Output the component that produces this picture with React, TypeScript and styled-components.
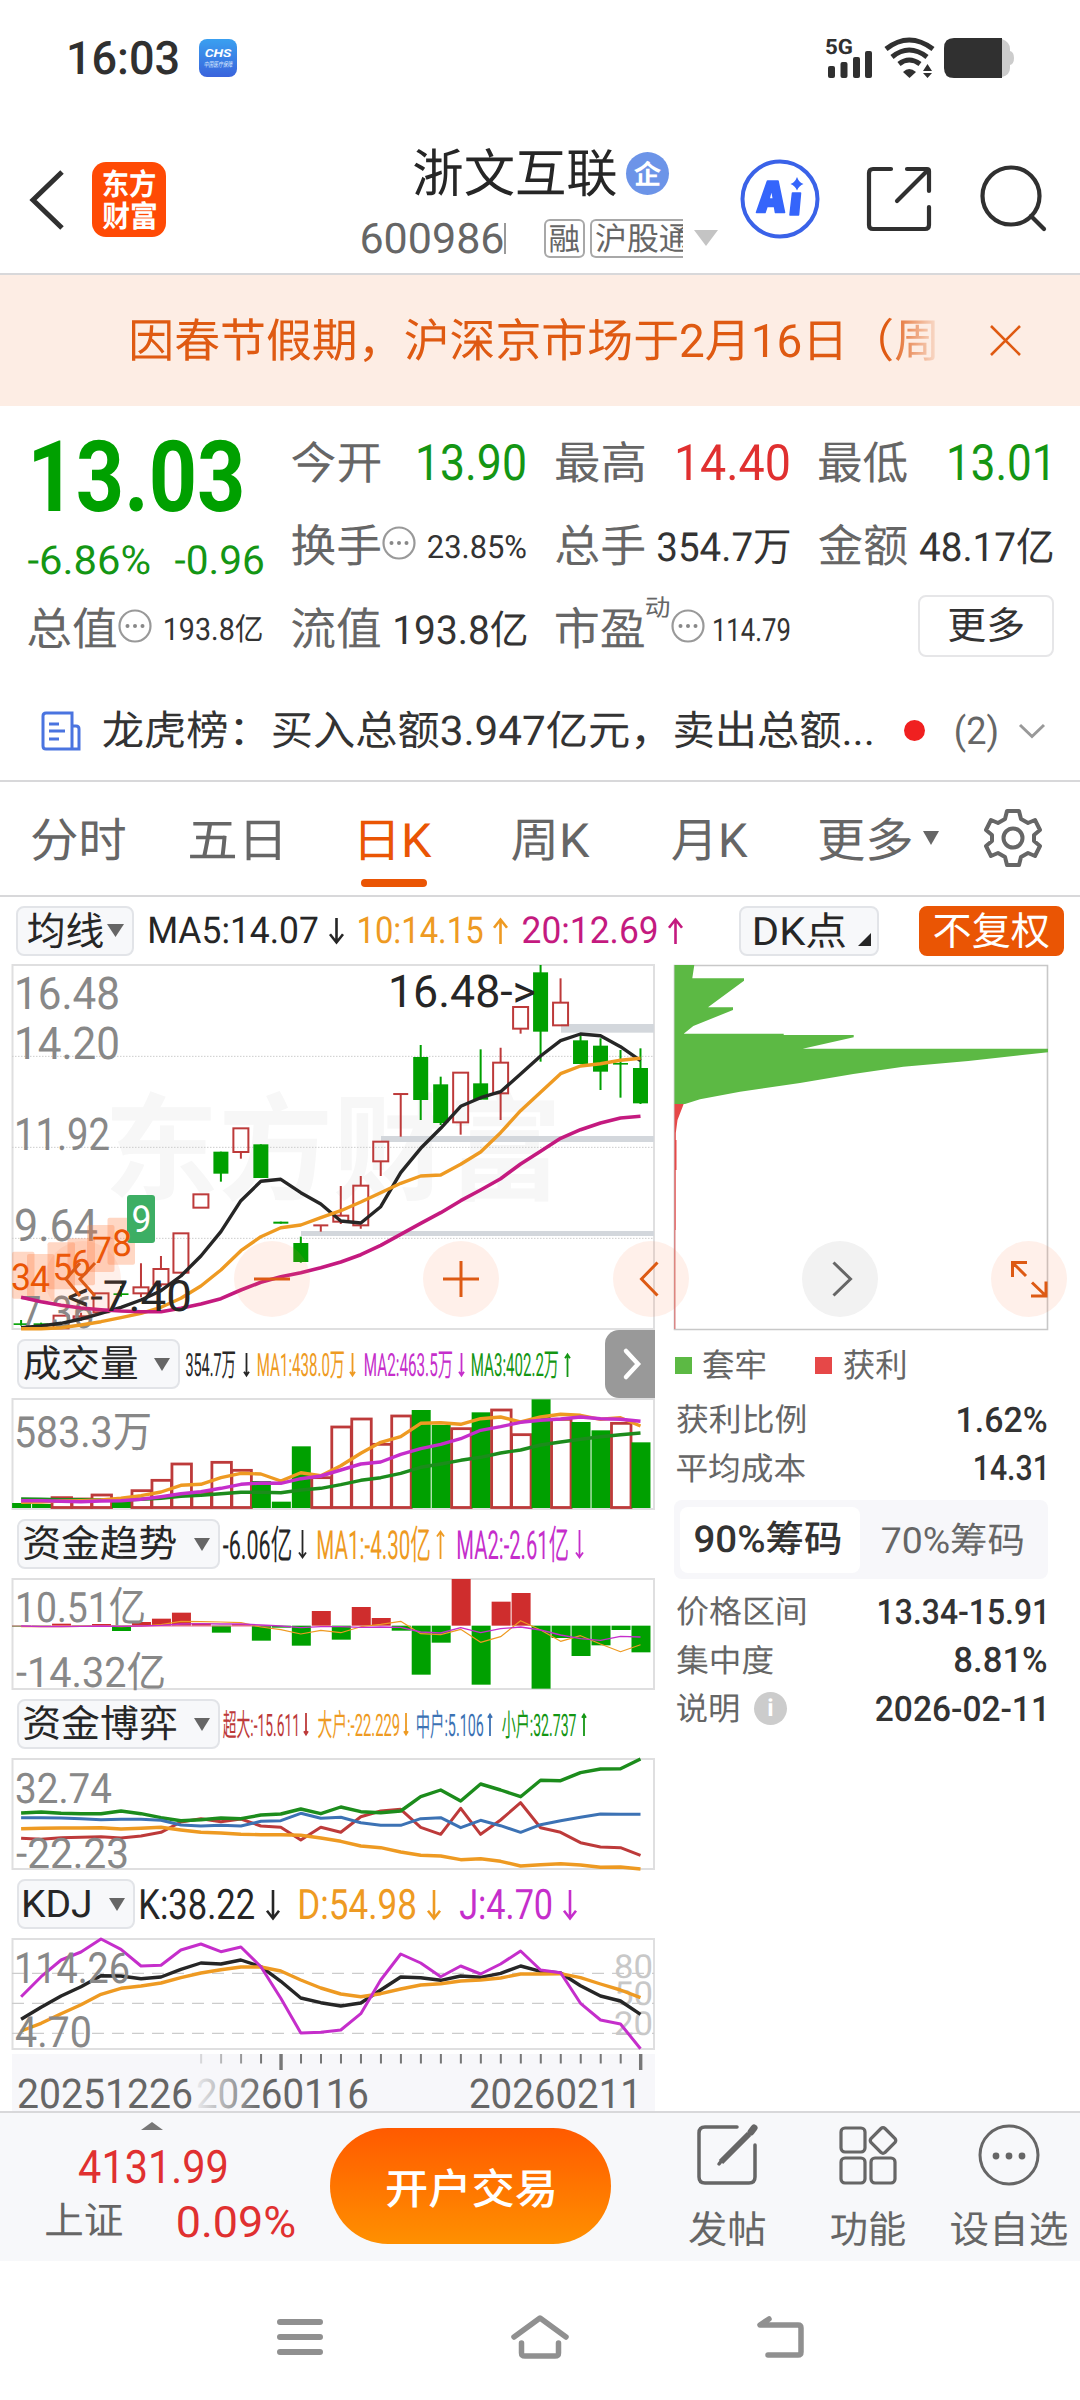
import React, { useLayoutEffect, useRef, useState } from "react";
import styled, { createGlobalStyle } from "styled-components";

const FONT = `Roboto, "Noto Sans CJK SC", sans-serif`;
const C = {
  ink: "#333333", dark: "#262626", grey: "#666666", light: "#888888",
  green: "#00a000", red: "#e03030", orange: "#ea5504", amber: "#ee9a22",
  pink: "#c41a7f", violet: "#c52ecb", line: "#d8d8da", up: "#bd3a3a",
};

const Global = createGlobalStyle`
  *{box-sizing:border-box}
  body{margin:0;background:#fff;font-family:${FONT};color:${C.ink};text-rendering:geometricPrecision}
`;

/* ---------- text fitted to a given ink width ---------- */
const TextBox = styled.span<{ $w: number; $ml: number; $mt: number; $size: number; $wt: number; $c: string }>`
  display: block;
  flex: none;
  width: ${(p) => p.$w}px;
  height: ${(p) => p.$size}px;
  line-height: ${(p) => p.$size + 3}px;
  margin-left: ${(p) => p.$ml}px;
  margin-top: ${(p) => p.$mt}px;
  font-size: ${(p) => p.$size}px;
  font-weight: ${(p) => p.$wt};
  color: ${(p) => p.$c};
  white-space: pre;
`;
const TextInk = styled.span`
  display: inline-block;
  transform-origin: 0 50%;
`;
type TProps = { w: number; size: number; ml?: number; mt?: number; wt?: number; c?: string; children: string };
function T({ w, size, ml = 0, mt = 0, wt = 400, c = C.ink, children }: TProps) {
  const ref = useRef<HTMLSpanElement>(null);
  const [tf, setTf] = useState("none");
  useLayoutEffect(() => {
    const ctx = document.createElement("canvas").getContext("2d");
    if (!ctx || !ref.current) return;
    ctx.font = `${wt} ${size * 4}px ${FONT}`;
    ctx.textRendering = "geometricPrecision";
    const m = ctx.measureText(children);
    const k = ref.current.offsetWidth / m.width;
    /* a leading or trailing 1 has a wide side bearing; part of it stays inside the box */
    const lead = children.startsWith("1") ? size * 0.035 : 0;
    const tail = children.endsWith("1") ? size * 0.07 : 0;
    const left = m.actualBoundingBoxLeft * k + lead;
    const ink = left + m.actualBoundingBoxRight * k + tail;
    const s = w / ink;
    setTf(`translateX(${left * s}px) scaleX(${s})`);
  }, [w, size, wt, children]);
  return (
    <TextBox $w={w} $ml={ml} $mt={mt} $size={size} $wt={wt} $c={c}>
      <TextInk ref={ref} style={{ transform: tf }}>{children}</TextInk>
    </TextBox>
  );
}

/* ---------- layout ---------- */
const Page = styled.div`
  width: 1080px;
  height: 2400px;
  overflow: hidden;
  display: flex;
  flex-direction: column;
  background: #fff;
`;
const Bar = styled.div<{ $h: number; $pl?: number; $pt?: number; $bg?: string; $line?: boolean }>`
  height: ${(p) => p.$h}px;
  flex: none;
  display: flex;
  align-items: center;
  padding-left: ${(p) => p.$pl ?? 0}px;
  padding-top: ${(p) => p.$pt ?? 0}px;
  background: ${(p) => p.$bg ?? "transparent"};
  border-bottom: ${(p) => (p.$line ? `2px solid ${C.line}` : "none")};
`;
const Icon = styled.svg<{ $ml?: number; $mt?: number }>`
  display: block;
  flex: none;
  margin-left: ${(p) => p.$ml ?? 0}px;
  margin-top: ${(p) => p.$mt ?? 0}px;
  overflow: visible;
`;
const ChsIcon = styled.div`
  width: 38px; height: 38px; margin-left: 21px;
  border-radius: 8px;
  background: linear-gradient(#3aa0f0, #3a63dc);
  display: flex; flex-direction: column; align-items: center; padding-top: 8px; gap: 2px;
  font-style: italic;
`;
const Logo = styled.div`
  width: 74px; height: 75px; margin-left: 28px; margin-top: 11px;
  border-radius: 14px; background: #ff4a05;
  display: flex; flex-direction: column; align-items: center; justify-content: center; gap: 2px;
`;
const TitleBlock = styled.div`
  width: 361px; margin-left: 196px; height: 150px;
  display: flex; flex-direction: column;
`;
const Line = styled.div<{ $h: number; $pl?: number; $mt?: number }>`
  display: flex; align-items: center;
  height: ${(p) => p.$h}px;
  margin-top: ${(p) => p.$mt ?? 0}px;
  padding-left: ${(p) => p.$pl ?? 0}px;
`;
const Badge = styled.div`
  width: 43px; height: 43px; border-radius: 50%; margin-left: 10px;
  background: #6c94e8; display: flex; align-items: center; justify-content: center;
`;
const Tag = styled.div<{ $w: number; $ml: number; $cut?: boolean }>`
  width: ${(p) => p.$w}px; height: 39px; margin-left: ${(p) => p.$ml}px;
  border: 2px solid #a8a8a8; border-radius: 6px;
  display: flex; align-items: center; padding-left: 4px; overflow: hidden;
  ${(p) => (p.$cut ? "border-right:none;border-top-right-radius:0;border-bottom-right-radius:0;" : "")}
`;
const Caret = styled.i`
  width: 2px; height: 31px; background: #999; margin-left: 1px;
`;
const Notice = styled.div`
  width: 803px; overflow: hidden; height: 56px; padding-top: 5px;
  mask-image: linear-gradient(90deg, #000 94%, rgba(0,0,0,.15));
`;
const Quotes = styled.div`
  height: 256px; flex: none;
  display: grid;
  grid-template-columns: 236px 236px 235px 235px;
  column-gap: 28px;
  grid-template-rows: 83px 83px 83px;
  padding: 15px 0 0 28px;
`;
const PriceCell = styled.div`
  grid-row: span 2;
  padding-left: 3px;
`;
const Cell = styled.div<{ $pr?: number }>`
  display: flex; align-items: center; justify-content: space-between;
  padding-right: ${(p) => p.$pr ?? 2}px;
`;
const Group = styled.div`display: flex; align-items: center;`;
const MoreButton = styled.div`
  margin: -5px -2px 0 auto; width: 136px; height: 62px;
  border: 2px solid #e6e6e8; border-radius: 8px;
  display: flex; align-items: center; justify-content: center;
`;
const Dot = styled.i`
  width: 21px; height: 21px; border-radius: 50%; background: #f02020; margin-left: 33px;
`;
const TabsRow = styled.div`
  height: 115px; flex: none; display: flex; padding: 0 0 0 32px;
  border-bottom: 2px solid ${C.line};
`;
const Tab = styled.div<{ $ml?: number }>`
  margin-left: ${(p) => p.$ml ?? 0}px;
  display: flex; flex-direction: column; padding-top: 35px;
`;
const Underline = styled.i`
  width: 66px; height: 8px; border-radius: 4px; background: ${C.orange}; margin-top: 15px;
`;
const Chip = styled.div<{ $w: number; $ml?: number; $pl?: number; $solid?: boolean }>`
  width: ${(p) => p.$w}px; height: 50px; margin-left: ${(p) => p.$ml ?? 0}px;
  flex: none; display: flex; align-items: center; padding-left: ${(p) => p.$pl ?? 7}px;
  border-radius: 8px;
  border: 2px solid ${(p) => (p.$solid ? C.orange : "#e2e4e8")};
  background: ${(p) => (p.$solid ? C.orange : "#f7f8fa")};
`;
const Body = styled.div`
  display: flex; height: 1148px; flex: none;
`;
const Charts = styled.div`
  width: 655px; padding-left: 12px; display: flex; flex-direction: column; flex: none;
`;
const Head = styled.div`
  height: 70px; flex: none; display: flex; align-items: center; padding: 0 0 0 5px;
`;
const PanelHandle = styled.div`
  width: 50px; height: 68px; margin-left: auto; flex: none;
  background: #999; border-radius: 14px 0 0 14px;
  display: flex; align-items: center; justify-content: center;
`;
const Side = styled.div`
  width: 374px; margin-left: 19px; display: flex; flex-direction: column;
`;
const Legend = styled.div`
  display: flex; align-items: center; height: 60px; margin-top: 5px;
`;
const Swatch = styled.i<{ $c: string; $ml?: number }>`
  width: 17px; height: 17px; background: ${(p) => p.$c}; margin-left: ${(p) => p.$ml ?? 1}px;
`;
const Stat = styled.div`
  height: 48.5px; display: flex; align-items: center; justify-content: space-between; padding: 0 2px 0 3px;
`;
const Segment = styled.div`
  height: 79px; margin: 8px 0 8px; padding: 6px; border-radius: 8px; background: #f7f7fa; display: flex;
  align-items: center;
`;
const SegOn = styled.div`
  width: 180px; height: 66px; background: #fff; border-radius: 8px;
  display: flex; align-items: center; padding-left: 15px;
`;
const Info = styled.i`
  width: 33px; height: 33px; border-radius: 50%; background: #ccc; margin-left: 16px;
  color: #fff; font: 700 24px/33px ${FONT}; text-align: center;
`;
const Footer = styled.div`
  height: 150px; flex: none; display: flex; background: #f7f8fa; border-top: 2px solid ${C.line};
`;
const IndexBox = styled.div`
  width: 330px; padding: 9px 0 0 46px; display: flex; flex-direction: column;
`;
const TradeButton = styled.div`
  width: 281px; height: 116px; margin-top: 15px; padding-top: 5px; border-radius: 58px;
  background: linear-gradient(#ff5a00, #ff9000);
  display: flex; align-items: center; justify-content: center;
`;
const Action = styled.div<{ $w: number; $ml: number }>`
  width: ${(p) => p.$w}px; margin-left: ${(p) => p.$ml}px; padding-top: 12px;
  display: flex; flex-direction: column; align-items: center;
`;
const NavRow = styled.div`
  height: 139px; display: flex; align-items: center; padding: 12px 0 0 277px;
`;

/* ---------- small drawings ---------- */
const Arrow = ({ up, w, h = 26, c, ml }: { up?: boolean; w: number; h?: number; c: string; ml: number }) => (
  <Icon $ml={ml} $mt={1} width={w} height={h} viewBox={`0 0 ${w} ${h}`}>
    <g fill="none" stroke={c} strokeWidth={w > 10 ? 2.6 : 1.8} transform={up ? undefined : `rotate(180 ${w / 2} ${h / 2})`}>
      <path d={`M${w / 2} ${h}V1.5M1 ${w * 0.55 + 1.5}L${w / 2} 1.5L${w - 1} ${w * 0.55 + 1.5}`} />
    </g>
  </Icon>
);
const Tri = ({ w = 16, h = 13, ml = 0, c = "#666", up, mt }: { w?: number; h?: number; ml?: number; c?: string; up?: boolean; mt?: number }) => (
  <Icon $ml={ml} $mt={mt} width={w} height={h} viewBox={`0 0 ${w} ${h}`}>
    <path fill={c} d={up ? `M0 ${h}H${w}L${w / 2} 0Z` : `M0 0H${w}L${w / 2} ${h}Z`} />
  </Icon>
);
const Dots = ({ ml = 2 }: { ml?: number }) => (
  <Icon $ml={ml} $mt={-6} width="34" height="34" viewBox="0 0 34 34">
    <circle cx="17" cy="17" r="15.5" fill="none" stroke="#999" strokeWidth="2.2" />
    <g fill="#888"><circle cx="9.5" cy="17" r="2" /><circle cx="17" cy="17" r="2" /><circle cx="24.5" cy="17" r="2" /></g>
  </Icon>
);

/* ---------- charts ---------- */
const SvgText = styled.text`font-family: ${FONT};`;
const X = (i: number) => 21.1 + 19.98 * i;
/* series are stored in thirds of a pixel below each chart's origin */
const path = (ys: number[]) => ys.map((y, i) => `${i ? "L" : "M"}${X(i).toFixed(1)} ${(y / 3).toFixed(1)}`).join("");
const Curve = ({ ys, c, w = 3.4 }: { ys: number[]; c: string; w?: number }) => (
  <path d={path(ys)} fill="none" stroke={c} strokeWidth={w} strokeLinejoin="round" />
);
const Label = ({ x, y, w, size = 45, c = C.light, children, ...r }: { x: number; y: number; w: number; size?: number; c?: string; children: string; [k: string]: unknown }) => (
  <SvgText x={x} y={y} fontSize={size} fill={c} textLength={w} lengthAdjust="spacingAndGlyphs" {...r}>{children}</SvgText>
);

/* kind, body top, body bottom, high, low */
const CANDLES: [string, number, number, number, number][] = [
  ["g", 1120, 1123, 1110, 1127], ["g", 1120, 1123, 1118, 1125], ["r", 1097, 1135, 1097, 1135], ["r", 1099, 1106, 1088, 1112],
  ["r", 1030, 1087, 1030, 1087], ["g", 1030, 1035, 1008, 1040], ["r", 1012, 1030, 940, 1042], ["r", 957, 1003, 918, 1010],
  ["r", 850, 968, 850, 968], ["r", 733, 773, 733, 773], ["g", 605, 671, 605, 695], ["r", 535, 606, 535, 626],
  ["g", 583, 684, 583, 684], ["g", 815, 821, 815, 821], ["g", 879, 936, 860, 938], ["r", 824, 828, 824, 845],
  ["r", 797, 815, 708, 822], ["r", 707, 826, 678, 836], ["r", 575, 634, 575, 678], ["r", 430, 434, 430, 560],
  ["g", 321, 450, 285, 510], ["g", 403, 519, 380, 525], ["r", 368, 517, 368, 554], ["g", 400, 449, 298, 449],
  ["r", 338, 430, 293, 510], ["r", 171, 236, 171, 251], ["g", 67, 245, 45, 335], ["r", 158, 226, 85, 226],
  ["g", 271, 342, 255, 342], ["g", 287, 365, 265, 420], ["g", 339, 343, 300, 443], ["g", 354, 460, 295, 462],
];
const MA5 = [1133, 1128, 1120, 1107, 1090, 1072, 1050, 1022, 978, 918, 845, 752, 694, 688, 728, 762, 813, 819, 770, 668, 595, 535, 469, 443, 425, 372, 318, 272, 252, 257, 290, 332];
const MA10 = [1136, 1136, 1133, 1125, 1115, 1103, 1090, 1072, 1045, 1008, 960, 902, 860, 833, 825, 803, 782, 756, 728, 700, 678, 675, 643, 606, 548, 482, 427, 371, 348, 341, 331, 325];
const MA20 = [1042, 1055, 1066, 1074, 1079, 1083, 1085, 1085, 1075, 1062, 1046, 1020, 997, 980, 968, 953, 936, 914, 886, 853, 820, 788, 752, 720, 686, 642, 604, 565, 539, 519, 504, 499];
const BANDS = [[561, 222, 248], [381, 558, 576], [301, 843, 858]];
const COUNTS: [string, number, number, number][] = [["3", 7, 905, 11], ["4", 27, 912, 30], ["5", 47.5, 877, 52.5], ["6", 67.5, 865, 71], ["7", 87, 825, 92], ["8", 107.5, 803, 112]];

const Round = ({ x, grey, children }: { x: number; grey?: boolean; children?: React.ReactNode }) => (
  <g>
    <circle cx={x} cy={329} r={38} fill={grey ? "#f2f2f2" : "#ff7a3c"} fillOpacity={grey ? 1 : 0.11} />
    <g fill="none" stroke={grey ? "#666" : "#dd5a14"} strokeWidth={3}>{children}</g>
  </g>
);

const KChart = () => (
  <Icon width="643" height="366" viewBox="12 13 643 366">
    <SvgText x={104} y={241} fontSize={116} fontWeight={700} fill="#f7f7f7" textLength={458} lengthAdjust="spacingAndGlyphs">东方财富</SvgText>
    <rect x="12.5" y="15" width="641.5" height="364" fill="none" stroke="#dfdfe0" strokeWidth="2" />
    {[319, 592, 865].map((y) => <path key={y} d={`M12 ${y / 3}H654`} stroke="#ccc" strokeDasharray="1.5 1.5" />)}
    {BANDS.map(([x, a, b]) => <rect key={x} x={x} y={a / 3} width={654 - x} height={(b - a) / 3} fill="#d3d7dc" />)}
    <Label x={14} y={59} w={106}>16.48</Label>
    <Label x={14} y={109} w={106}>14.20</Label>
    <Label x={14} y={200} w={96}>11.92</Label>
    <Label x={14} y={291} w={84}>9.64</Label>
    {CANDLES.map(([k, a, b, h, l], i) => k === "g" ? (
      <g key={i} fill={C.green}>
        <rect x={X(i) - 7.5} y={a / 3} width={15} height={Math.max(1.6, (b - a) / 3)} />
        <rect x={X(i) - 1} y={h / 3} width={2} height={(l - h) / 3} />
      </g>
    ) : (
      <g key={i} fill="none" stroke={C.up} strokeWidth={2}>
        {b - a < 6 ? <path d={`M${X(i) - 7.5} ${a / 3 + 0.7}h15`} /> : <rect x={X(i) - 7.5} y={a / 3} width={15} height={(b - a) / 3} />}
        <path d={`M${X(i)} ${h / 3}V${a / 3}M${X(i)} ${b / 3}V${l / 3}`} />
      </g>
    ))}
    {COUNTS.map(([t, x, y]) => <rect key={t} x={Math.max(12, x)} y={y / 3} width={27.5 - Math.max(0, 12 - x)} height={47} rx={2} fill="#ff7a3c" fillOpacity={0.3} />)}
    <rect x={127} y={245} width={28} height={48} rx={3} fill="#3dae64" />
    <Label x={20} y={378} w={74}>7.36</Label>
    <Curve ys={MA5} c={C.dark} />
    <Curve ys={MA10} c={C.amber} />
    <Curve ys={MA20} c={C.pink} w={3.6} />
    {COUNTS.map(([t, , y, x]) => <Label key={t} x={x} y={y / 3 + 38} w={20} size={37} c={C.orange}>{t}</Label>)}
    <Label x={131.5} y={282} w={20} size={37} c="#fff">9</Label>
    <Label x={388} y={57} w={148} c={C.dark}>16.48-&gt;</Label>
    <Label x={67} y={361} w={125} size={43} c={C.dark}>&lt;-7.40</Label>
  </Icon>
);

const Controls = styled.svg`
  position: absolute; left: 0; top: 0; display: block; pointer-events: none;
`;
const ControlLayer = styled.div`
  position: relative; height: 0; width: 1080px;
`;
const ControlShift = styled.div`
  margin-left: -674px; height: 0; position: relative; z-index: 2;
`;
const ChartControls = () => (
  <ControlLayer>
    <Controls width="1080" height="368" viewBox="0 13 1080 368">
      <Round x={83}><path d="M80 313L66 329L80 346M95 313L80 329L95 346" /></Round>
      <Round x={272}><path d="M254 329H290" /></Round>
      <Round x={461}><path d="M443 329H479M461 311V347" /></Round>
      <Round x={651}><path d="M657.5 312.5L641.5 329L657.5 345.5" /></Round>
      <Round x={840} grey><path d="M833.5 312.5L850.5 329L833.5 345.5" /></Round>
      <Round x={1029}><path d="M1012.5 327V312.5H1027M1012.5 312.5L1026 326M1031 346H1046V331.5M1046 346L1032 332.5" /></Round>
    </Controls>
  </ControlLayer>
);

const Mini = ({ children }: { children: React.ReactNode }) => (
  <Icon width="643" height="110" viewBox="12 69 643 110">
    <rect x="12.5" y="69" width="641.5" height="110" fill="none" stroke="#dfdfe0" strokeWidth="2" />
    {children}
  </Icon>
);

const VOL = "g519 g522 r500 r504 r492 g505 r479 r448 r399 r484 r394 r418 g453 g515 g349 r440 r288 r264 r340 r255 g240 g285 r293 g247 r237 r311 g208 r265 g276 g301 r277 g337".split(" ");
const V1 = [517, 516, 513, 512, 510, 505, 497, 486, 466, 463, 443, 430, 432, 453, 428, 437, 407, 370, 337, 320, 280, 278, 283, 266, 261, 276, 261, 253, 256, 268, 263, 288];
const V2 = [512, 512, 514, 515, 513, 512, 508, 500, 491, 485, 475, 463, 459, 460, 446, 438, 420, 402, 396, 373, 356, 343, 326, 301, 290, 277, 271, 267, 261, 266, 268, 274];
const V3 = [507, 508, 509, 509, 510, 510, 508, 505, 499, 496, 491, 487, 487, 488, 480, 475, 464, 451, 443, 430, 412, 402, 391, 382, 369, 360, 345, 336, 328, 320, 314, 309];
const VolumeChart = () => (
  <Mini>
    {VOL.map((v, i) => {
      const y = +v.slice(1) / 3;
      return v[0] === "g"
        ? <rect key={i} x={X(i) - 9} y={y} width={19} height={178 - y} fill={C.green} />
        : <rect key={i} x={X(i) - 9} y={y + 1} width={19.5} height={176.5 - y} fill="#fff" stroke={C.up} strokeWidth={2.8} />;
    })}
    <Curve ys={V3} c="#1c8c1c" /><Curve ys={V1} c={C.amber} /><Curve ys={V2} c={C.violet} />
    <Label x={14} y={117} w={138} size={43}>583.3万</Label>
  </Mini>
);

const FLOW = [350, 351, 341, 350, 342, 363, 336, 326, 308, 340, 368, 342, 392, 353, 407, 303, 389, 291, 324, 362, 494, 398, 207, 524, 275, 249, 536, 384, 438, 406, 360, 427];
const F1 = [350, 350, 350, 349, 348, 350, 348, 344, 334, 335, 336, 338, 351, 359, 372, 361, 368, 350, 343, 334, 371, 374, 358, 397, 380, 332, 360, 394, 377, 402, 425, 404];
const F2 = [348, 350, 350, 349, 348, 349, 348, 346, 342, 341, 342, 342, 345, 348, 353, 350, 350, 352, 351, 352, 366, 369, 353, 368, 356, 351, 360, 375, 386, 391, 379, 381];
const FlowChart = () => (
  <Mini>
    {FLOW.map((y, i) => <rect key={i} x={X(i) - 9} y={Math.min(y, 347) / 3} width={19} height={Math.abs(y - 347) / 3} fill={y > 347 ? C.green : "#cf2d2d"} />)}
    <path d="M12 116H270" stroke="#e66a8c" strokeWidth="1" />
    <Curve ys={F1} c={C.amber} w={1.2} /><Curve ys={F2} c={C.violet} w={1.3} />
    <Label x={15} y={112} w={131} size={42}>10.51亿</Label>
    <Label x={16} y={177} w={150} size={42}>-14.32亿</Label>
  </Mini>
);

const G1 = [369, 366, 370, 371, 371, 363, 371, 383, 392, 389, 384, 386, 375, 372, 357, 371, 351, 365, 368, 363, 320, 300, 333, 282, 300, 320, 271, 272, 248, 237, 236, 207];
const G2 = [383, 383, 384, 386, 389, 388, 388, 391, 405, 408, 406, 408, 394, 392, 370, 385, 382, 398, 406, 406, 386, 383, 413, 391, 407, 427, 404, 392, 382, 372, 373, 373];
const G3 = [416, 415, 414, 414, 413, 417, 415, 412, 420, 427, 429, 433, 434, 434, 436, 444, 454, 468, 473, 486, 496, 498, 509, 506, 514, 528, 524, 521, 525, 532, 531, 537];
const G4 = [445, 448, 443, 442, 440, 444, 438, 427, 396, 386, 395, 387, 408, 412, 450, 412, 427, 380, 363, 358, 412, 433, 355, 433, 390, 338, 413, 427, 458, 471, 473, 496];
const GameChart = () => (
  <Mini>
    <Curve ys={G4} c={C.up} w={3} /><Curve ys={G3} c={C.amber} /><Curve ys={G1} c="#1c8c1c" /><Curve ys={G2} c="#3c72b4" w={3} />
    <Label x={15} y={113} w={97} size={42}>32.74</Label>
    <Label x={16} y={178} w={113} size={42}>-22.23</Label>
  </Mini>
);

const K = [448, 412, 378, 350, 317, 318, 326, 321, 298, 279, 282, 270, 290, 334, 384, 398, 408, 399, 360, 321, 323, 331, 318, 322, 310, 288, 304, 309, 347, 378, 393, 433];
const D = [483, 460, 431, 404, 373, 355, 348, 339, 323, 309, 299, 291, 291, 303, 330, 354, 372, 380, 371, 357, 345, 341, 333, 330, 324, 312, 312, 311, 323, 342, 360, 383];
const J = [380, 320, 270, 246, 207, 238, 288, 286, 240, 222, 245, 231, 290, 385, 489, 487, 480, 431, 330, 252, 279, 320, 288, 312, 282, 243, 300, 308, 400, 450, 462, 536];
const KdjChart = () => (
  <Mini>
    {[310, 400, 490].map((y) => <path key={y} d={`M12 ${y / 3}H654`} stroke="#ccc" strokeWidth="1.4" strokeDasharray="12 8" />)}
    <Label x={614} y={108} w={39} size={33} c="#c8c8c8">80</Label>
    <Label x={614} y={135} w={39} size={33} c="#c8c8c8">50</Label>
    <Label x={614} y={165} w={39} size={33} c="#c8c8c8">20</Label>
    <Curve ys={K} c={C.dark} /><Curve ys={D} c={C.amber} /><Curve ys={J} c={C.violet} w={3} />
    <Label x={14} y={113} w={116} size={43}>114.26</Label>
    <Label x={15} y={177} w={77} size={43}>4.70</Label>
  </Mini>
);

const Axis = styled.div`
  height: 57px; margin-top: 5px; width: 643px; background: #f7f7fa; flex: none;
`;
const TimeAxis = () => (
  <Axis>
    <Icon width="643" height="57" viewBox="12 0 643 57">
      <defs>
        <linearGradient id="fade" gradientUnits="userSpaceOnUse" x1="197" x2="262" y1="0" y2="0">
          <stop offset="0" stopColor="#666" stopOpacity=".1" /><stop offset="1" stopColor="#666" />
        </linearGradient>
      </defs>
      {Array.from({ length: 23 }, (_, k) => k + 9).map((i) => {
        const tall = i === 13 || i === 31;
        return <rect key={i} x={X(i) - (tall ? 1.5 : 0.8)} y={0} width={tall ? 3.4 : 2} height={tall ? 16 : 9.5} fill="#777" opacity={i < 12 ? (i - 8) * 0.25 : 1} />;
      })}
      <Label x={17} y={54} w={176} size={41} c={C.grey}>20251226</Label>
      <Label x={196} y={54} w={173} size={41} c="url(#fade)">20260116</Label>
      <Label x={469} y={54} w={173} size={41} c={C.grey}>20260211</Label>
    </Icon>
  </Axis>
);

const ChipChart = () => (
  <Icon width="374" height="367" viewBox="674 63 374 367">
    <path d="M674.5 65.5H1047.5V429.5H674.5Z" fill="none" stroke="#c8c8c8" strokeWidth="1.6" />
    <path fill="#5cb944" d="M674.5 65H694.3L692.3 78.3H744V80.7L708 107.3H733V110L693.3 126L683.7 133.7H783.7V135H853.7V137.3L802.7 148.7H1048V152.3L1020 155.3L968.3 161L903.3 166.7L853.3 174L800 183L740 191.7L700 199.3L685 204H674.5Z" />
    <path fill="#e64848" d="M674.5 204H683.7L677.5 220L675.8 233V240H676.5V270H675.7V330H675.3V429H674.5Z" />
  </Icon>
);

const Select = ({ w, tw, ml, children }: { w: number; tw: number; ml: number; children: string }) => (
  <Chip $w={w} $pl={5}>
    <T w={tw} size={38} c={C.dark}>{children}</T>
    <Tri ml={ml} />
  </Chip>
);

export default function App() {
  return (
    <Page>
      <Global />
      <Bar $h={115} $pl={68}>
        <T w={110} size={46} wt={500} c="#303030">16:03</T>
        <ChsIcon>
          <T w={26} size={11} wt={700} c="#fff">CHS</T>
          <T w={28} size={7} c="#dceaff">中国医疗保障</T>
        </ChsIcon>
        <Icon $ml={589} width="186" height="42" viewBox="0 0 186 42" fill="#303030">
          <SvgText x="-1" y="17" fontSize="21" fontWeight="700" textLength="28" lengthAdjust="spacingAndGlyphs">5G</SvgText>
          <rect x="2" y="29" width="7" height="12" rx="2" /><rect x="14.5" y="25" width="7" height="16" rx="2" />
          <rect x="27" y="20" width="7" height="21" rx="2" /><rect x="39" y="14" width="7" height="27" rx="2" />
          <g fill="none" stroke="#303030" strokeWidth="5">
            <path d="M60 12Q83 -6 107 12" /><path d="M66 20Q83 6 101 20" /><path d="M73 27Q83 19 94 27" />
          </g>
          <path d="M77 35Q83 29 90 35L83.5 41Z" /><path d="M97 34L101.5 27L106 34ZM97 36H106L101.5 41Z" />
          <path d="M176 2Q184 5 184 12V14Q188 15 188 21T184 28V31Q184 38 176 40Z" fill="#ccc" />
          <path d="M128 1H176V41H128Q118 41 118 31V11Q118 1 128 1Z" />
        </Icon>
      </Bar>
      <Bar $h={160} $pl={30} $line>
        <Icon $mt={11} width="34" height="60" viewBox="0 0 34 60"><path d="M32 2L3 30L32 58" fill="none" stroke="#303030" strokeWidth="5" /></Icon>
        <Logo>
          <T w={52} size={30} wt={700} c="#fff">东方</T>
          <T w={53} size={30} wt={700} c="#fff">财富</T>
        </Logo>
        <TitleBlock>
          <Line $h={50} $pl={52} $mt={29}>
            <T w={202} size={52} c={C.dark}>浙文互联</T>
            <Badge><T w={27} size={27} wt={700} c="#fff">企</T></Badge>
          </Line>
          <Line $h={42} $mt={19}>
            <T w={141} size={42} c={C.grey}>600986</T>
            <Caret />
            <Tag $w={41} $ml={38}><T w={29} size={31} c={C.grey}>融</T></Tag>
            <Tag $w={93} $ml={5} $cut><T w={94} size={32} c={C.grey}>沪股通</T></Tag>
            <Tri ml={11} w={24} h={16} c="#c4c4c4" />
          </Line>
        </TitleBlock>
        <Icon $ml={17} $mt={10} width="80" height="80" viewBox="0 0 80 80">
          <circle cx="40" cy="40" r="37.5" fill="none" stroke="#3a62e8" strokeWidth="4" />
          <g fill="#3565fb" stroke="#3565fb" strokeWidth="1.6" strokeLinejoin="round">
            <path fillRule="evenodd" d="M27.5 22H38L44.500 53.500H35.500L34.500 47.500H27L25 53.500H16.500ZM31.500 30L29 40H33.500Z" />
            <path d="M52.500 34H60.500L58.500 56H50Z" />
          </g>
          <path d="M57 18Q59 23.500 63.500 25Q59 26.500 57 31.500Q55 26.500 50.500 25Q55 23.500 57 18Z" fill="#3565fb" />
        </Icon>
        <Icon $ml={47} $mt={10} width="64" height="64" viewBox="0 0 64 64" fill="none" stroke="#303030" strokeWidth="4.2" strokeLinecap="round">
          <path d="M24 2H6Q2 2 2 6V58Q2 62 6 62H58Q62 62 62 58V40M40 2H60Q62 2 62 4V24M61 3L30 34" />
        </Icon>
        <Icon $ml={49} $mt={8} width="66" height="66" viewBox="0 0 66 66" fill="none" stroke="#303030" strokeWidth="4.2" strokeLinecap="round">
          <circle cx="31" cy="31" r="28.5" /><path d="M51 51L64 64" />
        </Icon>
      </Bar>
      <Bar $h={131} $pl={132} $bg="#fdede4">
        <Notice><T w={803} size={46} c="#df5a12">因春节假期，沪深京市场于2月16日（周</T></Notice>
        <Icon $ml={55} width="31" height="31" viewBox="0 0 31 31"><path d="M1 1L30 30M30 1L1 30" stroke="#df5a12" strokeWidth="2.6" /></Icon>
      </Bar>

      <Quotes>
        <PriceCell>
          <T w={211} mt={6} size={99} wt={700} c={C.green}>13.03</T>
          <Line $h={42} $mt={12}>
            <T ml={-3} w={121} size={40} c="#149614">-6.86%</T>
            <T ml={26} w={88} size={40} c="#149614">-0.96</T>
          </Line>
        </PriceCell>
        <Cell $pr={3}><T w={88} size={45} c={C.grey}>今开</T><T w={108} size={50} c="#149614">13.90</T></Cell>
        <Cell><T w={88} size={45} c={C.grey}>最高</T><T w={113} size={50} c={C.red}>14.40</T></Cell>
        <Cell $pr={3}><T w={88} size={45} c={C.grey}>最低</T><T w={103} size={50} c="#149614">13.01</T></Cell>
        <Cell><Group><T w={88} size={45} c={C.grey}>换手</T><Dots /></Group><T w={98} size={32}>23.85%</T></Cell>
        <Cell><T w={88} size={45} c={C.grey}>总手</T><T w={131} size={40}>354.7万</T></Cell>
        <Cell><T w={88} size={45} c={C.grey}>金额</T><T w={132} size={40}>48.17亿</T></Cell>
        <Cell><Group><T w={88} size={45} c={C.grey}>总值</T><Dots /></Group><T w={98} size={31}>193.8亿</T></Cell>
        <Cell><T w={88} size={45} c={C.grey}>流值</T><T w={132} size={40}>193.8亿</T></Cell>
        <Cell><Group><T w={88} size={45} c={C.grey}>市盈</T><T ml={2} mt={-43} w={23} size={24} c={C.grey}>动</T><Dots /></Group><T w={76} size={32}>114.79</T></Cell>
        <Cell><MoreButton><T w={74} size={38}>更多</T></MoreButton></Cell>
      </Quotes>
      <Bar $h={120} $pl={41} $pt={19} $line>
        <Icon width="40" height="40" viewBox="0 0 40 40" fill="none" stroke="#4a74e0" strokeWidth="3">
          <path d="M5 2H31V38H5Q2 38 2 35V5Q2 2 5 2ZM31 15H35Q38 15 38 18V38H31M8 13H18M8 20H24M8 28H18" />
        </Icon>
        <T ml={22} w={768} size={41}>龙虎榜：买入总额3.947亿元，卖出总额...</T>
        <Dot />
        <T ml={31} w={41} size={38} c={C.grey}>(2)</T>
        <Icon $ml={22} width="26" height="14" viewBox="0 0 26 14"><path d="M1 1L13 12.5L25 1" fill="none" stroke="#999" strokeWidth="3" /></Icon>
      </Bar>

      <TabsRow>
        <Tab><T w={93} size={47} c={C.grey}>分时</T></Tab>
        <Tab $ml={65}><T w={90} size={47} c={C.grey}>五日</T></Tab>
        <Tab $ml={81}><T w={71} size={47} c={C.orange}>日K</T><Underline /></Tab>
        <Tab $ml={80}><T w={78} size={47} c={C.grey}>周K</T></Tab>
        <Tab $ml={82}><T w={76} size={47} c={C.grey}>月K</T></Tab>
        <Tab $ml={71}><T w={92} size={47} c={C.grey}>更多</T></Tab>
        <Tri ml={12} mt={49} h={14} />
        <Icon $ml={46} $mt={27} width="56" height="58" viewBox="0 0 56 58" fill="none" stroke="#666" strokeWidth="4" strokeLinejoin="round">
          <path d="M22 2H34L36 10L43 14L50 11L55 21L49 26V32L55 37L50 47L43 44L36 48L34 56H22L20 48L13 44L6 47L1 37L7 32V26L1 21L6 11L13 14L20 10Z" />
          <circle cx="28" cy="29" r="9.5" />
        </Icon>
      </TabsRow>
      <Bar $h={66} $pl={16} $pt={1}>
        <Chip $w={118} $pl={10}><T w={75} size={39} c={C.dark}>均线</T><Tri ml={4} w={17} /></Chip>
        <T ml={16} w={167} size={37} c={C.dark}>MA5:14.07</T><Arrow ml={12} w={15} c={C.dark} />
        <T ml={14} w={124} size={37} c={C.amber}>10:14.15</T><Arrow up ml={11} w={15} c={C.amber} />
        <T ml={15} w={133} size={37} c={C.pink}>20:12.69</T><Arrow up ml={12} w={15} c={C.pink} />
        <Chip $w={140} $ml={56} $pl={14}>
          <T w={90} size={39} c={C.dark}>DK点</T>
          <Icon $ml={13} $mt={18} width="13" height="13" viewBox="0 0 13 13"><path d="M13 0V13H0Z" fill={C.dark} /></Icon>
        </Chip>
        <Chip $w={145} $ml={40} $pl={13} $solid><T w={115} size={39} c="#fff">不复权</T></Chip>
      </Bar>

      <Body>
        <Charts>
          <KChart />
          <Head>
            <Select w={163} tw={113} ml={17}>成交量</Select>
            <T ml={6} w={49} size={32} c={C.dark}>354.7万</T><Arrow ml={8} w={7} h={24} c={C.dark} />
            <T ml={8} w={86} size={32} c={C.amber}>MA1:438.0万</T><Arrow ml={5} w={7} h={24} c={C.amber} />
            <T ml={9} w={87} size={32} c={C.violet}>MA2:463.5万</T><Arrow ml={6} w={7} h={24} c={C.violet} />
            <T ml={7} w={86} size={32} c="#149614">MA3:402.2万</T><Arrow up ml={6} w={7} h={24} c="#149614" />
            <PanelHandle>
              <Icon $ml={4} width="18" height="30" viewBox="0 0 18 30"><path d="M3 2L15 15L3 28" fill="none" stroke="#fff" strokeWidth="4.5" strokeLinecap="round" /></Icon>
            </PanelHandle>
          </Head>
          <VolumeChart />
          <Head>
            <Select w={203} tw={152} ml={18}>资金趋势</Select>
            <T ml={3} w={68} size={40} c={C.dark}>-6.06亿</T><Arrow ml={7} w={9} h={29} c={C.dark} />
            <T ml={11} w={112} size={40} c={C.amber}>MA1:-4.30亿</T><Arrow up ml={6} w={9} h={29} c={C.amber} />
            <T ml={13} w={110} size={40} c={C.violet}>MA2:-2.61亿</T><Arrow ml={7} w={9} h={29} c={C.violet} />
          </Head>
          <FlowChart />
          <Head>
            <Select w={203} tw={152} ml={18}>资金博弈</Select>
            <T ml={3} w={75} size={31} c={C.up}>超大:-15.611</T><Arrow ml={5} w={6} h={23} c={C.up} />
            <T ml={9} w={81} size={31} c={C.amber}>大户:-22.229</T><Arrow ml={4} w={6} h={23} c={C.amber} />
            <T ml={8} w={66} size={31} c="#3c72b4">中户:5.106</T><Arrow up ml={4} w={6} h={23} c="#3c72b4" />
            <T ml={9} w={74} size={31} c="#149614">小户:32.737</T><Arrow up ml={5} w={6} h={23} c="#149614" />
          </Head>
          <GameChart />
          <Head>
            <Select w={118} tw={66} ml={19}>KDJ</Select>
            <T ml={6} w={113} size={42} c={C.dark}>K:38.22</T><Arrow ml={12} w={14} h={30} c={C.dark} />
            <T ml={20} w={115} size={42} c={C.amber}>D:54.98</T><Arrow ml={12} w={14} h={30} c={C.amber} />
            <T ml={19} w={91} size={42} c={C.violet}>J:4.70</T><Arrow ml={12} w={14} h={30} c={C.violet} />
          </Head>
          <KdjChart />
          <TimeAxis />
        </Charts>
        <Side>
          <ControlShift><ChartControls /></ControlShift>
          <ChipChart />
          <Legend>
            <Swatch $c="#5cb944" /><T ml={11} w={62} size={33} c={C.grey}>套牢</T>
            <Swatch $c="#e64848" $ml={50} /><T ml={12} w={61} size={33} c={C.grey}>获利</T>
          </Legend>
          <Stat><T w={128} size={32} c={C.grey}>获利比例</T><T w={89} size={35} wt={500}>1.62%</T></Stat>
          <Stat><T w={128} size={32} c={C.grey}>平均成本</T><T w={72} size={35} wt={500}>14.31</T></Stat>
          <Segment>
            <SegOn><T w={145} size={37} wt={500}>90%筹码</T></SegOn>
            <T ml={22} w={141} size={36} c={C.grey}>70%筹码</T>
          </Segment>
          <Stat><T w={128} size={32} c={C.grey}>价格区间</T><T w={168} size={35} wt={500}>13.34-15.91</T></Stat>
          <Stat><T w={96} size={32} c={C.grey}>集中度</T><T w={91} size={35} wt={500}>8.81%</T></Stat>
          <Stat><Group><T w={61} size={32} c={C.grey}>说明</T><Info>i</Info></Group><T w={170} size={35} wt={500}>2026-02-11</T></Stat>
        </Side>
      </Body>

      <Footer>
        <IndexBox>
          <Tri up ml={95} w={22} h={8} c="#777" />
          <T ml={33} mt={14} w={147} size={46} c={C.red}>4131.99</T>
          <Line $h={44} $mt={9}>
            <T w={76} size={38} c={C.grey}>上证</T>
            <T ml={56} w={116} size={43} c={C.red}>0.09%</T>
          </Line>
        </IndexBox>
        <TradeButton><T w={167} size={42} wt={500} c="#fff">开户交易</T></TradeButton>
        <Action $w={78} $ml={77}>
          <Icon width="60" height="60" viewBox="0 0 60 60" fill="none" stroke="#666" strokeWidth="3.5" strokeLinecap="round">
            <path d="M40 2H8Q2 2 2 8V52Q2 58 8 58H52Q58 58 58 52V20" />
            <path d="M52 9L24 37" strokeWidth="6" strokeLinecap="butt" /><path d="M54 7L57 3" strokeWidth="7" /><path d="M22 39L26 34" />
          </Icon>
          <T mt={26} w={76} size={38} c={C.grey}>发帖</T>
        </Action>
        <Action $w={76} $ml={64}>
          <Icon width="58" height="60" viewBox="0 0 58 60" fill="none" stroke="#666" strokeWidth="3.2">
            <rect x="2" y="3" width="24" height="24" rx="4" /><rect x="2" y="33" width="24" height="25" rx="4" /><rect x="32" y="33" width="24" height="25" rx="4" />
            <path d="M42 3.5Q44 1.5 46 3.5L56 13.5Q57.5 15.5 56 17.5L46 27.5Q44 29 42 27.5L32 17.5Q30.5 15.5 32 13.5Z" />
          </Icon>
          <T mt={26} w={74} size={38} c={C.grey}>功能</T>
        </Action>
        <Action $w={118} $ml={44}>
          <Icon width="62" height="62" viewBox="0 0 62 62">
            <circle cx="31" cy="30" r="29" fill="none" stroke="#666" strokeWidth="3" />
            <g fill="#666"><circle cx="18" cy="31" r="3.4" /><circle cx="31" cy="31" r="3.4" /><circle cx="44" cy="31" r="3.4" /></g>
          </Icon>
          <T mt={24} w={116} size={38} c={C.grey}>设自选</T>
        </Action>
      </Footer>
      <NavRow>
        <Icon width="46" height="38" viewBox="0 0 46 38" stroke="#909090" strokeWidth="6" strokeLinecap="round"><path d="M3 4H43M3 19H43M3 34H43" /></Icon>
        <Icon $ml={188} width="58" height="44" viewBox="0 0 58 44" fill="none" stroke="#909090" strokeWidth="5.5" strokeLinecap="round" strokeLinejoin="round">
          <path d="M3 22L29 3L55 22M10.5 28V38Q10.5 41 14 41H44Q47.5 41 47.5 38V28" />
        </Icon>
        <Icon $ml={187} width="48" height="42" viewBox="0 0 48 42" fill="none" stroke="#909090" strokeWidth="5.5" strokeLinecap="round" strokeLinejoin="round">
          <path d="M13 3L4 9H42Q45 9 45 12V36Q45 39 42 39H12" />
        </Icon>
      </NavRow>
    </Page>
  );
}
